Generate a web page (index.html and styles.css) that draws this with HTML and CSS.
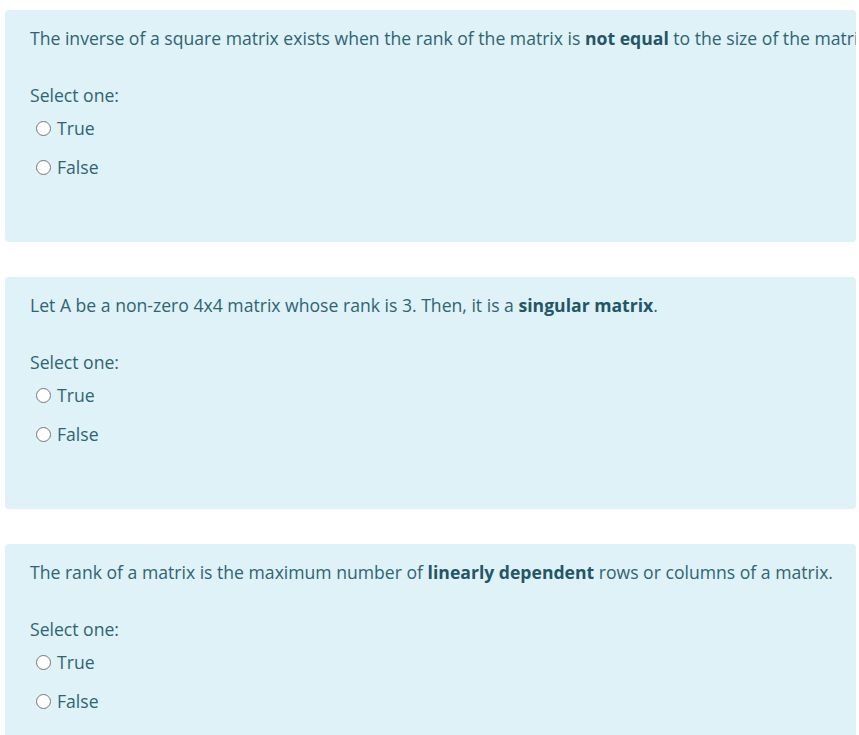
FILE: index.html
```html
<!DOCTYPE html>
<html>
<head>
<meta charset="utf-8">
<link rel="stylesheet" href="styles.css">
</head>
<body>
<div class="page">
  <div class="que">
    <p class="qtext">The inverse of a square matrix exists when the rank of the matrix is <strong>not equal</strong> to the size of the matrix.</p>
    <div class="prompt">Select one:</div>
    <div class="answer">
      <label class="opt"><span class="radio"></span>True</label>
      <label class="opt"><span class="radio"></span>False</label>
    </div>
  </div>
  <div class="que">
    <p class="qtext">Let A be a non-zero 4x4 matrix whose rank is 3. Then, it is a <strong>singular matrix</strong>.</p>
    <div class="prompt">Select one:</div>
    <div class="answer">
      <label class="opt"><span class="radio"></span>True</label>
      <label class="opt"><span class="radio"></span>False</label>
    </div>
  </div>
  <div class="que">
    <p class="qtext">The rank of a matrix is the maximum number of <strong>linearly dependent</strong> rows or columns of a matrix.</p>
    <div class="prompt">Select one:</div>
    <div class="answer">
      <label class="opt"><span class="radio"></span>True</label>
      <label class="opt"><span class="radio"></span>False</label>
    </div>
  </div>
</div>
</body>
</html>
```
FILE: styles.css
```css
html, body {
  margin: 0;
  padding: 0;
  background: #ffffff;
}
body {
  font-family: "Open Sans", "Noto Sans", sans-serif;
  font-size: 17.6px;
  line-height: 25px;
  color: #2f6473;
  overflow: hidden;
}
.page {
  padding: 10px 3px 0 5px;
  display: flex;
  flex-direction: column;
  gap: 35px;
}
.que {
  background: #def2f8;
  border-radius: 4px;
  height: 232px;
  padding: 16px 0 0 25px;
  box-sizing: border-box;
  overflow: hidden;
}
.qtext {
  margin: 0;
  white-space: nowrap;
}
.qtext strong {
  font-weight: 700;
  color: #245665;
}
.prompt {
  margin-top: 32px;
}
.answer {
  display: flex;
  flex-direction: column;
  gap: 14px;
  margin-top: 8px;
}
.opt {
  display: flex;
  align-items: center;
  padding-left: 6px;
}
.radio {
  width: 13px;
  height: 13px;
  border: 1px solid #767676;
  border-radius: 50%;
  background: #ffffff;
  margin-right: 6px;
}
```
